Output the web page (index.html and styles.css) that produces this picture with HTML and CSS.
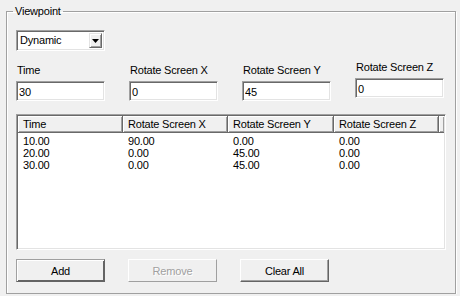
FILE: index.html
```html
<!DOCTYPE html>
<html>
<head>
  <meta name="viewport" content="width=device-width, initial-scale=1.0">
  <title>Viewpoint</title>
  <link rel="stylesheet" href="styles.css">
</head>
<body>
  <fieldset class="group">
    <legend>Viewpoint</legend>

    <!-- Mode combo -->
    <div class="combo">
      <span class="combo-value">Dynamic</span>
      <span class="combo-btn">
        <svg width="7" height="4" viewBox="0 0 7 4"><path d="M0 0H7L3.5 4Z" fill="#000"/></svg>
      </span>
    </div>

    <!-- Key fields -->
    <div class="fields">
      <label class="field">
        <span class="field-label">Time</span>
        <input class="edit" type="text" value="30">
      </label>
      <label class="field">
        <span class="field-label">Rotate Screen X</span>
        <input class="edit" type="text" value="0">
      </label>
      <label class="field">
        <span class="field-label">Rotate Screen Y</span>
        <input class="edit" type="text" value="45">
      </label>
      <label class="field field-raised">
        <span class="field-label">Rotate Screen Z</span>
        <input class="edit" type="text" value="0">
      </label>
    </div>

    <!-- Key list -->
    <div class="list">
      <div class="list-head">
        <div class="col">Time</div>
        <div class="col">Rotate Screen X</div>
        <div class="col">Rotate Screen Y</div>
        <div class="col">Rotate Screen Z</div>
        <div class="col col-fill"></div>
      </div>
      <div class="rows">
        <div class="row">
          <div class="cell">10.00</div><div class="cell">90.00</div><div class="cell">0.00</div><div class="cell">0.00</div>
        </div>
        <div class="row">
          <div class="cell">20.00</div><div class="cell">0.00</div><div class="cell">45.00</div><div class="cell">0.00</div>
        </div>
        <div class="row">
          <div class="cell">30.00</div><div class="cell">0.00</div><div class="cell">45.00</div><div class="cell">0.00</div>
        </div>
      </div>
    </div>

    <!-- Buttons -->
    <div class="buttons">
      <button class="btn btn-default">Add</button>
      <button class="btn" disabled>Remove</button>
      <button class="btn">Clear All</button>
    </div>
  </fieldset>
</body>
</html>
```

FILE: styles.css
```css
body {
  margin: 0;
  background-color: #f0f0f0;
  font-family: "Liberation Sans", Arial, sans-serif;
  font-size: 11px;
  line-height: 13px;
  letter-spacing: -0.2px;
  color: #000;
}

.group {
  margin: 5px 4px 0 6px;
  padding: 12px 9px 0 9px;
  border: 1px solid #a0a0a0;
  box-shadow: inset 1px 1px #fff, 1px 1px #fff;
  height: 289px;
  box-sizing: border-box;
}

.group legend {
  padding: 0 2px;
  margin-left: -3px;
  line-height: 13px;
}

/* combo box */
.combo {
  display: flex;
  align-items: center;
  width: 89px;
  height: 21px;
  box-sizing: border-box;
  background-color: #fff;
  border: 1px solid;
  border-color: #a0a0a0 #fff #fff #a0a0a0;
  box-shadow: inset 1px 1px #696969, inset -1px -1px #e3e3e3;
  padding: 2px;
}

.combo-value {
  flex: 1;
  padding-left: 1px;
}

.combo-btn {
  display: flex;
  align-items: center;
  justify-content: center;
  width: 13px;
  height: 15px;
  box-sizing: border-box;
  background-color: #f0f0f0;
  border: 1px solid;
  border-color: #e3e3e3 #696969 #696969 #e3e3e3;
  box-shadow: inset 1px 1px #fff, inset -1px -1px #a0a0a0;
}

/* edit fields */
.fields {
  display: grid;
  grid-template-columns: repeat(4, 89px);
  column-gap: 24px;
  margin-top: 13px;
}

.field {
  display: flex;
  flex-direction: column;
  gap: 4px;
}

.field-raised {
  margin-top: -3px;
}

.field-label {
  padding-left: 1px;
}

.edit {
  width: 89px;
  height: 20px;
  box-sizing: border-box;
  margin: 0;
  padding: 1px 2px 0 2px;
  font-family: inherit;
  font-size: 11px;
  letter-spacing: -0.2px;
  color: #000;
  background-color: #fff;
  border: 1px solid;
  border-color: #a0a0a0 #fff #fff #a0a0a0;
  box-shadow: inset 1px 1px #696969, inset -1px -1px #e3e3e3;
  outline: none;
}

/* list view */
.list {
  margin-top: 13px;
  height: 136px;
  box-sizing: border-box;
  background-color: #fff;
  border: 1px solid;
  border-color: #a0a0a0 #fff #fff #a0a0a0;
  box-shadow: inset 1px 1px #696969, inset -1px -1px #e3e3e3;
  padding: 1px;
}

.list-head,
.row {
  display: grid;
  grid-template-columns: 105px 105px 106px 105px 1fr;
}

.list-head {
  height: 17px;
}

.col {
  background-color: #f0f0f0;
  box-sizing: border-box;
  padding: 2px 0 0 5px;
  border-right: 1px solid #696969;
  border-bottom: 1px solid #696969;
  box-shadow: inset 1px 1px #fff, inset -1px -1px #a0a0a0;
}

.col-fill {
  border-right: none;
}

.rows {
  padding-top: 2px;
}

.row {
  height: 12px;
  line-height: 12px;
}

.cell {
  padding-left: 5px;
}

/* buttons */
.buttons {
  display: grid;
  grid-template-columns: repeat(3, 89px);
  column-gap: 23px;
  margin-top: 9px;
}

.btn {
  height: 23px;
  margin: 0;
  padding: 0;
  font-family: inherit;
  font-size: 11px;
  letter-spacing: -0.2px;
  color: #000;
  background-color: #f0f0f0;
  border: 1px solid;
  border-color: #fff #646464 #646464 #fff;
  box-shadow: inset -1px -1px #a0a0a0;
}

.btn-default {
  border-color: #a0a0a0 #646464 #646464 #a0a0a0;
  box-shadow: inset 1px 1px #fff, inset -1px -1px #646464;
}

.btn:disabled {
  color: #a0a0a0;
  text-shadow: 1px 1px #fff;
  border-color: #fff #a0a0a0 #a0a0a0 #fff;
  box-shadow: none;
}
```
